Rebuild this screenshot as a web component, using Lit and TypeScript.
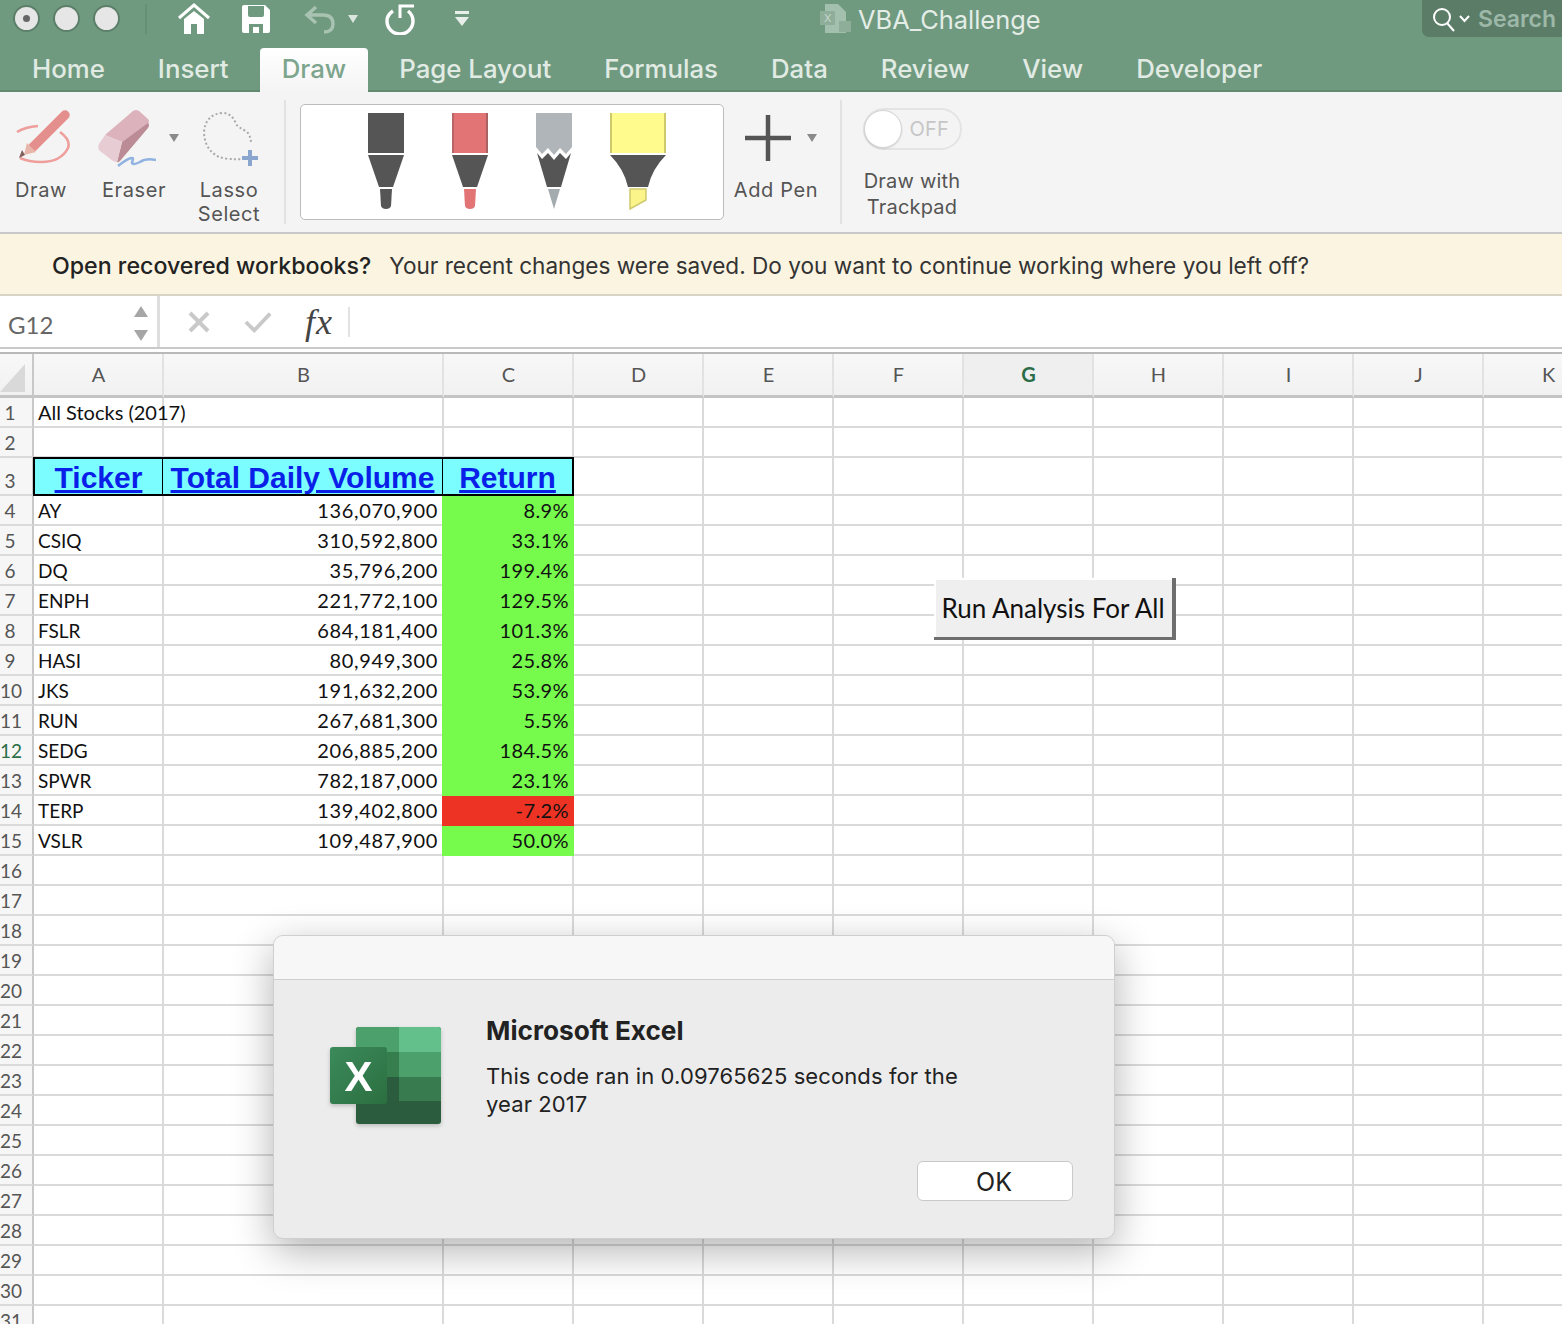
import {LitElement, html, css, svg} from 'lit';
import {customElement} from 'lit/decorators.js';

const TABS = ['Home', 'Insert', 'Draw', 'Page Layout', 'Formulas', 'Data', 'Review', 'View', 'Developer'];
const COLUMNS = ['A', 'B', 'C', 'D', 'E', 'F', 'G', 'H', 'I', 'J', 'K'];
const STOCKS = [
  ['AY', '136,070,900', '8.9%'],
  ['CSIQ', '310,592,800', '33.1%'],
  ['DQ', '35,796,200', '199.4%'],
  ['ENPH', '221,772,100', '129.5%'],
  ['FSLR', '684,181,400', '101.3%'],
  ['HASI', '80,949,300', '25.8%'],
  ['JKS', '191,632,200', '53.9%'],
  ['RUN', '267,681,300', '5.5%'],
  ['SEDG', '206,885,200', '184.5%'],
  ['SPWR', '782,187,000', '23.1%'],
  ['TERP', '139,402,800', '-7.2%'],
  ['VSLR', '109,487,900', '50.0%'],
];

const penIcons = [
  svg`<rect x="12" y="2" width="36" height="40" fill="#555"/>
    <path d="M12 44H48L37 76H23Z" fill="#555"/>
    <path d="M24 78H36L35 95Q34 98 30 98Q26 98 25 95Z" fill="#555"/>`,
  svg`<rect x="12" y="2" width="36" height="40" fill="#e27475"/>
    <rect x="46" y="2" width="2" height="40" fill="#a96263"/>
    <rect x="12" y="2" width="2" height="40" fill="#b76566"/>
    <path d="M12 44H48L37 76H23Z" fill="#555"/>
    <path d="M24 78H36L35 95Q34 98 30 98Q26 98 25 95Z" fill="#e27475"/>`,
  svg`<path d="M12 2H48V36L42 43L36 37L30 44L24 37L18 43L12 36Z" fill="#afb5b8"/>
    <path d="M13 42L18 48L24 42L30 49L36 42L42 48L47 42L37 76H23Z" fill="#555"/>
    <path d="M24 78H36L30 98Z" fill="#a4abaf"/>`,
  svg`<rect x="2" y="2" width="56" height="40" fill="#fffb8c"/>
    <rect x="2" y="2" width="2" height="40" fill="#cfc96e"/>
    <rect x="56" y="2" width="2" height="40" fill="#cfc96e"/>
    <path d="M2 44H58Q44 58 40 76H20Q16 58 2 44Z" fill="#555"/>
    <path d="M22 78H38V89L22 98Z" fill="#fbf48a" stroke="#cfc96e" stroke-width="1.5"/>`,
];

@customElement('app-root')
export class AppRoot extends LitElement {
  static styles = css`
    :host {
      display: block;
      position: relative;
      width: 1562px;
      height: 1324px;
      overflow: hidden;
      background: #fff;
      font-family: Inter, 'Liberation Sans', sans-serif;
    }

    svg {
      display: block;
      flex: none;
    }

    .chrome {
      height: 90px;
      background: #6f9a7f;
      border-bottom: 2px solid #628a71;
    }

    .titlebar {
      display: flex;
      align-items: center;
      box-sizing: border-box;
      height: 37px;
      margin-bottom: 11px;
      padding-left: 13px;
    }

    .light {
      width: 23px;
      height: 23px;
      margin-right: 13px;
      border: 2px solid #5c7f69;
      border-radius: 50%;
      background: #e6e6e6;
      display: flex;
      align-items: center;
      justify-content: center;
    }

    .light i {
      width: 7px;
      height: 7px;
      border-radius: 50%;
      background: #666;
    }

    .title-divider {
      width: 2px;
      height: 30px;
      margin-left: 12px;
      background: #678f76;
    }

    .home-icon {
      margin-left: 30px;
    }

    .save-icon {
      margin-left: 30px;
    }

    .undo-icon {
      margin-left: 33px;
    }

    .undo-caret {
      margin-left: 11px;
    }

    .redo-icon {
      margin-left: 25px;
    }

    .more-icon {
      margin-left: 38px;
    }

    .doc-title {
      display: flex;
      align-items: center;
      gap: 6px;
      margin-left: 350px;
      padding-top: 1px;
      color: #e4ede7;
      font-size: 25.400px;
      white-space: nowrap;
    }

    .search {
      display: flex;
      align-items: center;
      gap: 4px;
      box-sizing: border-box;
      width: 140px;
      height: 37px;
      margin-left: auto;
      padding-left: 11px;
      border-bottom-left-radius: 7px;
      background: #5b7d68;
      color: #9db8a8;
      font-size: 23px;
      font-weight: 600;
    }

    .search span {
      margin-left: 4px;
    }

    .tabs {
      display: flex;
      gap: 9px;
      height: 42px;
      padding-left: 10px;
      align-items: flex-start;
    }

    .tab {
      height: 44px;
      padding: 0 22px;
      line-height: 42px;
      color: #e1ebe4;
      font-size: 25.800px;
      font-weight: 500;
    }

    .tab.active {
      background: linear-gradient(#fff, #f4f4f4);
      border-radius: 4px 4px 0 0;
      color: #7da58d;
      position: relative;
      z-index: 1;
    }

    .ribbon {
      display: flex;
      height: 140px;
      background: #f4f4f4;
      border-bottom: 2px solid #c8c8c8;
      color: #555;
      font-size: 20px;
      letter-spacing: 0.6px;
    }

    .tool {
      display: flex;
      flex-direction: column;
      align-items: center;
      padding-top: 16px;
      line-height: 24px;
      text-align: center;
    }

    .tool svg {
      margin-bottom: 10px;
    }

    .tool.draw {
      width: 82px;
    }

    .tool.eraser {
      width: 104px;
    }

    .tool.lasso {
      width: 86px;
    }

    .tool.add-pen {
      width: 104px;
      padding-top: 21px;
    }

    .tool.add-pen svg {
      margin-bottom: 5px;
    }

    .eraser-icons {
      display: flex;
      align-items: flex-start;
      margin-left: 8px;
    }

    .eraser-icons .caret {
      margin: 25px 0 0 12px;
    }

    .add-pen-icons {
      display: flex;
      align-items: center;
      margin: 0 0 10px 9px;
    }

    .add-pen-icons .caret {
      margin: 0 0 5px 14px;
    }

    .separator {
      width: 2px;
      height: 124px;
      margin: 8px 0 0 12px;
      background: #e2e2e2;
    }

    .gallery {
      display: flex;
      gap: 24px;
      box-sizing: border-box;
      width: 424px;
      height: 116px;
      margin: 12px 0 0 14px;
      padding: 6px 0 0 55px;
      border: 1px solid #bcbcbc;
      border-radius: 5px;
      background: #fff;
    }

    .trackpad {
      display: flex;
      flex-direction: column;
      align-items: center;
      width: 140px;
      padding-top: 16px;
      line-height: 26px;
      letter-spacing: 0.2px;
      text-align: center;
    }

    .toggle {
      display: flex;
      align-items: center;
      box-sizing: border-box;
      width: 99px;
      height: 42px;
      margin: 0 0 18px 0;
      border: 2px solid #e4e4e4;
      border-radius: 21px;
      color: #c6c6c6;
      font-size: 20px;
    }

    .knob {
      width: 38px;
      height: 38px;
      margin: 0 8px 0 -1px;
      border: 1px solid #d4d4d4;
      border-radius: 50%;
      background: #fff;
      box-shadow: 0 1px 2px #0000001f;
      box-sizing: border-box;
    }

    .notice {
      display: flex;
      align-items: center;
      gap: 18px;
      box-sizing: border-box;
      height: 62px;
      padding: 3px 0 0 52px;
      background: #fbf4e1;
      border-bottom: 2px solid #d8d4c6;
      color: #333;
      font-size: 22.600px;
      white-space: nowrap;
    }

    .notice b {
      font-size: 23.200px;
      font-weight: 500;
      color: #222;
    }

    .formula {
      display: flex;
      align-items: center;
      box-sizing: border-box;
      height: 58px;
      border-bottom: 2px solid #b9b9b9;
      position: relative;
    }

    .formula::after {
      content: '';
      position: absolute;
      left: 0;
      right: 0;
      bottom: 3px;
      border-top: 2px solid #c9c9c9;
    }

    .name-box {
      display: flex;
      align-items: center;
      justify-content: space-between;
      box-sizing: border-box;
      width: 160px;
      height: 52px;
      margin-bottom: 4px;
      padding: 4px 8px 0 8px;
      border-right: 3px solid #dedede;
      color: #666;
      font-family: Lato, sans-serif;
      font-size: 24px;
    }

    .formula-icons {
      display: flex;
      align-items: center;
      height: 52px;
      margin-bottom: 4px;
    }

    .cancel-icon {
      margin-left: 28px;
    }

    .check-icon {
      margin-left: 34px;
    }

    .fx {
      margin-left: 33px;
      color: #444;
      font-family: 'Liberation Serif', serif;
      font-size: 36px;
      font-style: italic;
      letter-spacing: 1px;
      line-height: 1;
    }

    .fx-line {
      width: 2px;
      height: 30px;
      margin-left: 15px;
      background: #e2e2e2;
    }

    .sheet {
      display: grid;
      grid-template-columns: 34px 130px 280px repeat(9, 130px);
      grid-template-rows: 44px 30px 30px 38px repeat(28, 30px);
      font-family: Lato, sans-serif;
      font-size: 20px;
      color: #111;
    }

    .cell {
      box-sizing: border-box;
      border-right: 2px solid #dadada;
      border-bottom: 2px solid #dadada;
      padding: 0 4px;
      line-height: 28px;
      white-space: nowrap;
    }

    .head,
    .corner {
      background: linear-gradient(#f8f8f8, #f1f1f1);
      border-right: 2px solid #e2e2e2;
      border-bottom: 3px solid #c4c4c4;
      box-sizing: border-box;
      padding-left: 1px;
      color: #555;
      line-height: 41px;
      text-align: center;
    }

    .corner {
      border-right: 2px solid #c8c8c8;
      position: relative;
    }

    .corner svg {
      position: absolute;
      left: 0;
      top: 8px;
    }

    .head.on {
      background: #efefef;
      color: #2b6d47;
      font-weight: 700;
    }

    .row {
      background: #f6f6f6;
      border-right: 2px solid #c8c8c8;
      border-bottom: 2px solid #dadada;
      box-sizing: border-box;
      padding: 1px 12px 0 0;
      color: #555;
      font-size: 19px;
      line-height: 28px;
      text-align: center;
      white-space: nowrap;
    }

    .row.on {
      color: #2b6d47;
    }

    .row.tall {
      line-height: 44px;
    }

    .ticker {
      padding-top: 1px;
      font-size: 19px;
    }

    .num {
      letter-spacing: 0.65px;
      text-align: right;
    }

    .title {
      display: flex;
      align-items: center;
      justify-content: center;
      overflow: hidden;
      margin: -1px 0 0 -1px;
      padding: 2px 0 0;
      border-top: 2px solid #000;
      border-right: 2px solid #000;
      border-bottom: 2px solid #000;
      background: #7bfdff;
      color: #0a1fe8;
      font-family: 'Liberation Sans', sans-serif;
      font-size: 30px;
      font-weight: 700;
      text-decoration: underline;
    }

    .title.first {
      border-left: 2px solid #000;
    }

    .good,
    .bad {
      margin-left: -2px;
      padding-right: 5px;
      border-right: none;
      letter-spacing: 0.4px;
      text-align: right;
    }

    .good {
      background: #76fb4d;
      border-bottom-color: #76fb4d;
    }

    .bad {
      background: #ed3323;
      border-bottom-color: #ed3323;
    }

    .run {
      position: absolute;
      left: 934px;
      top: 578px;
      box-sizing: border-box;
      width: 242px;
      height: 62px;
      padding: 2px 0 5px 0;
      border-right: 4px solid #6e6e6e;
      border-bottom: 3px solid #6e6e6e;
      background: #efefef;
      box-shadow: inset 2px 2px 0 #fff;
      color: #111;
      font-family: Lato, sans-serif;
      font-size: 26px;
      line-height: 56px;
      text-align: center;
    }

    .dialog {
      position: absolute;
      left: 273px;
      top: 935px;
      box-sizing: border-box;
      width: 842px;
      height: 304px;
      border: 1px solid #cfcfcf;
      border-radius: 10px;
      background: #ececec;
      box-shadow: 0 12px 40px #0000004d;
      color: #222;
      overflow: hidden;
    }

    .dialog-top {
      height: 43px;
      background: #f7f7f7;
      border-bottom: 1px solid #cfcfcf;
    }

    .dialog-body {
      display: flex;
      padding: 47px 0 0 56px;
    }

    .excel-logo {
      filter: drop-shadow(0 2px 2px #00000033);
    }

    .dialog-copy {
      width: 500px;
      margin: -14px 0 0 44px;
      font-size: 22px;
      letter-spacing: 0.1px;
      line-height: 28px;
      white-space: nowrap;
    }

    .dialog-copy h2 {
      margin: 0 0 13px;
      font-size: 26.200px;
      font-weight: 700;
      letter-spacing: 0;
      line-height: 36px;
    }

    .ok {
      position: absolute;
      left: 643px;
      top: 225px;
      box-sizing: border-box;
      width: 156px;
      height: 40px;
      border: 1px solid #c9c9c9;
      border-radius: 6px;
      background: #fff;
      font-size: 25px;
      line-height: 40px;
      padding-right: 2px;
      text-align: center;
    }
  `;

  renderTitlebar() {
    return html`<div class="titlebar">
      <span class="light"><i></i></span>
      <span class="light"></span>
      <span class="light"></span>
      <span class="title-divider"></span>
      <svg class="home-icon" width="34" height="32" viewBox="0 0 34 32" fill="#fff">
        <path d="M2 15L17 2L32 15" fill="none" stroke="#fff" stroke-width="3"/>
        <path d="M7 16L17 8L27 16V31H20V21H14V31H7Z"/>
      </svg>
      <svg class="save-icon" width="30" height="30" viewBox="0 0 30 30">
        <path fill="#fff" fill-rule="evenodd" d="M3 1H24L29 6V27Q29 29 27 29H3Q1 29 1 27V3Q1 1 3 1ZM7 2V11Q7 13 9 13H21Q23 13 23 11V2ZM8 20V29H22V20Z"/>
        <rect x="12" y="23" width="6" height="6" fill="#fff"/>
      </svg>
      <svg class="undo-icon" width="32" height="30" viewBox="0 0 32 30" fill="none" stroke="#a9c3b2" stroke-width="3.4">
        <path d="M12 3L3 11L12 19M3 11H19Q29 11 29 20Q29 28 20 28"/>
      </svg>
      <svg class="undo-caret" width="12" height="10" viewBox="0 0 12 10"><path d="M1 1H11L6 9Z" fill="#dbe6df"/></svg>
      <svg class="redo-icon" width="32" height="32" viewBox="0 0 32 32" fill="none" stroke="#fff" stroke-width="3.4">
        <path d="M9 8Q3 12 3 18A13 13 0 0 0 29 18Q29 12 24 8"/>
        <path d="M16 15V3H30" stroke-width="3"/>
      </svg>
      <svg class="more-icon" width="16" height="18" viewBox="0 0 16 18" fill="#e8efeb">
        <rect x="1" y="1" width="14" height="3"/><path d="M1 7H15L8 16Z"/>
      </svg>
      <div class="doc-title">
        <svg width="32" height="32" viewBox="0 0 32 32">
          <path d="M5 1H18L26 9V30H5Z" fill="#a3bfae"/>
          <rect x="0" y="8" width="15" height="14" fill="#8eae9a"/>
          <rect x="19" y="18" width="12" height="11" fill="#8eae9a"/>
          <text x="4" y="19" font-size="11" fill="#c6d8cc">X</text>
        </svg>
        <span>VBA_Challenge</span>
      </div>
      <div class="search">
        <svg width="22" height="28" viewBox="0 0 22 28" fill="none" stroke="#fff" stroke-width="2">
          <circle cx="9" cy="12" r="8"/><path d="M14 18L21 26"/>
        </svg>
        <svg width="11" height="8" viewBox="0 0 11 8" fill="none" stroke="#fff" stroke-width="2"><path d="M1 1L5.500 6L10 1"/></svg>
        <span>Search</span>
      </div>
    </div>`;
  }

  renderRibbon() {
    return html`<div class="ribbon">
      <div class="tool draw">
        <svg width="60" height="60" viewBox="0 0 60 60" fill="none">
          <path d="M6 24Q14 19 27 18M49 24Q60 32 57 40Q50 54 30 54Q18 54 9 50" stroke="#ee9f9c" stroke-width="2.600"/>
          <path d="M54 7L22 39" stroke="#e48f8d" stroke-width="9.500" stroke-linecap="round"/>
          <path d="M16 35L25 44L13 47Z" fill="#e8b5aa"/>
          <path d="M11 42L14 47L8 50Z" fill="#80605c"/>
        </svg>
        <span>Draw</span>
      </div>
      <div class="tool eraser">
        <div class="eraser-icons">
          <svg width="60" height="60" viewBox="0 0 60 60" fill="none">
            <path d="M9 27L37 3Q40 1 43 3L52 11Q54 13 52 16L26 34Z" fill="#dcb2bc"/>
            <path d="M26 34L52 15Q54 17 52 20L24 53Q22 55 21 54Z" fill="#bc8c96"/>
            <path d="M9 27L26 34L21 54Q19 54 17 53L4 43Q1 40 3 36Z" fill="#e7ccd3"/>
            <path d="M22 58Q32 50 36 50Q38 50 36 54Q36 58 44 54Q50 50 60 52" stroke="#8fb2e0" stroke-width="2.500"/>
          </svg>
          <svg class="caret" width="12" height="10" viewBox="0 0 12 10"><path d="M1 1H11L6 9Z" fill="#8a8a8a"/></svg>
        </div>
        <span>Eraser</span>
      </div>
      <div class="tool lasso">
        <svg width="60" height="60" viewBox="0 0 60 60" fill="none">
          <path d="M46 51Q30 52 20 49Q6 42 5 25Q6 6 24 5Q33 5 37 16Q40 20 47 23Q52 27 52 36" stroke="#a8a8a8" stroke-width="2" stroke-dasharray="2 2.400"/>
          <path d="M51 42V58M43 50H59" stroke="#8aa6cf" stroke-width="4"/>
        </svg>
        <span>Lasso<br />Select</span>
      </div>
      <div class="separator"></div>
      <div class="gallery">
        ${penIcons.map(
          (pen) => html`<svg width="60" height="100" viewBox="0 0 60 100">${pen}</svg>`
        )}
      </div>
      <div class="tool add-pen">
        <div class="add-pen-icons">
          <svg width="48" height="50" viewBox="0 0 48 50" fill="none" stroke="#555" stroke-width="4.500">
            <path d="M24 2V48M1 25H47"/>
          </svg>
          <svg class="caret" width="12" height="10" viewBox="0 0 12 10"><path d="M1 1H11L6 9Z" fill="#8a8a8a"/></svg>
        </div>
        <span>Add Pen</span>
      </div>
      <div class="separator"></div>
      <div class="trackpad">
        <div class="toggle"><span class="knob"></span>OFF</div>
        <span>Draw with<br />Trackpad</span>
      </div>
    </div>`;
  }

  renderFormula() {
    return html`<div class="formula">
      <div class="name-box">
        <span>G12</span>
        <svg width="16" height="36" viewBox="0 0 16 36" fill="#a6a6a6">
          <path d="M8 0L15 11H1Z"/><path d="M1 24H15L8 35Z"/>
        </svg>
      </div>
      <div class="formula-icons">
        <svg class="cancel-icon" width="22" height="22" viewBox="0 0 22 22" stroke="#c9c9c9" stroke-width="4">
          <path d="M2 2L20 20M20 2L2 20"/>
        </svg>
        <svg class="check-icon" width="28" height="22" viewBox="0 0 30 22" fill="none" stroke="#c9c9c9" stroke-width="4">
          <path d="M2 11L11 20L28 2"/>
        </svg>
        <span class="fx">fx</span>
        <span class="fx-line"></span>
      </div>
    </div>`;
  }

  renderSheet() {
    const cells = [];
    cells.push(html`<div class="corner">
      <svg width="26" height="30" viewBox="0 0 26 30"><path d="M0 30L25 2V30Z" fill="#d9d9d9"/></svg>
    </div>`);
    for (const col of COLUMNS) {
      cells.push(html`<div class="head ${col === 'G' ? 'on' : ''}">${col}</div>`);
    }
    // twelve data rows start at sheet row 4, everything else is empty grid
    for (let r = 1; r <= 31; r++) {
      const cls = `row ${r === 12 ? 'on' : ''} ${r === 3 ? 'tall' : ''}`;
      cells.push(html`<div class=${cls}>${r}</div>`);
      const stock = r >= 4 && r <= 15 ? STOCKS[r - 4] : null;
      if (r === 3) {
        cells.push(html`<div class="cell title first">Ticker</div>`);
        cells.push(html`<div class="cell title">Total Daily Volume</div>`);
        cells.push(html`<div class="cell title">Return</div>`);
      } else if (stock) {
        cells.push(html`<div class="cell ticker">${stock[0]}</div>`);
        cells.push(html`<div class="cell num">${stock[1]}</div>`);
        cells.push(html`<div class="cell ${stock[2].startsWith('-') ? 'bad' : 'good'}">${stock[2]}</div>`);
      } else {
        cells.push(html`<div class="cell">${r === 1 ? 'All Stocks (2017)' : ''}</div>`);
        cells.push(html`<div class="cell"></div>`);
        cells.push(html`<div class="cell"></div>`);
      }
      for (let c = 0; c < COLUMNS.length - 3; c++) {
        cells.push(html`<div class="cell"></div>`);
      }
    }
    return html`<div class="sheet">${cells}</div>`;
  }

  renderDialog() {
    return html`<div class="dialog">
      <div class="dialog-top"></div>
      <div class="dialog-body">
        <svg class="excel-logo" width="112" height="100" viewBox="0 0 112 100">
          <defs>
            <linearGradient id="front" x1="0" y1="0" x2="1" y2="1">
              <stop offset="0" stop-color="#3c8a5b" />
              <stop offset="1" stop-color="#2b6f40" />
            </linearGradient>
            <clipPath id="back"><rect x="26" y="0" width="85" height="97" rx="3" /></clipPath>
          </defs>
          <g clip-path="url(#back)">
            <rect x="26" y="0" width="85" height="97" fill="#2a5c3d" />
            <rect x="26" y="0" width="43" height="25" fill="#4ba06c" />
            <rect x="69" y="0" width="42" height="25" fill="#63c08a" />
            <rect x="26" y="25" width="43" height="25" fill="#377e4f" />
            <rect x="69" y="25" width="42" height="25" fill="#4ba06c" />
            <rect x="69" y="50" width="42" height="24" fill="#377b4e" />
          </g>
          <rect x="0" y="20" width="57" height="57" rx="3" fill="url(#front)" />
          <text x="28.500" y="64" fill="#fff" font-family="Liberation Sans, sans-serif" font-size="42" font-weight="700" text-anchor="middle">X</text>
        </svg>
        <div class="dialog-copy">
          <h2>Microsoft Excel</h2>
          This code ran in 0.09765625 seconds for the<br />year 2017
        </div>
      </div>
      <div class="ok">OK</div>
    </div>`;
  }

  render() {
    return html`
      <div class="chrome">
        ${this.renderTitlebar()}
        <div class="tabs">
          ${TABS.map((tab) => html`<div class="tab ${tab === 'Draw' ? 'active' : ''}">${tab}</div>`)}
        </div>
      </div>
      ${this.renderRibbon()}
      <div class="notice">
        <b>Open recovered workbooks?</b>
        <span>Your recent changes were saved. Do you want to continue working where you left off?</span>
      </div>
      ${this.renderFormula()} ${this.renderSheet()}
      <div class="run">Run Analysis For All</div>
      ${this.renderDialog()}
    `;
  }
}
